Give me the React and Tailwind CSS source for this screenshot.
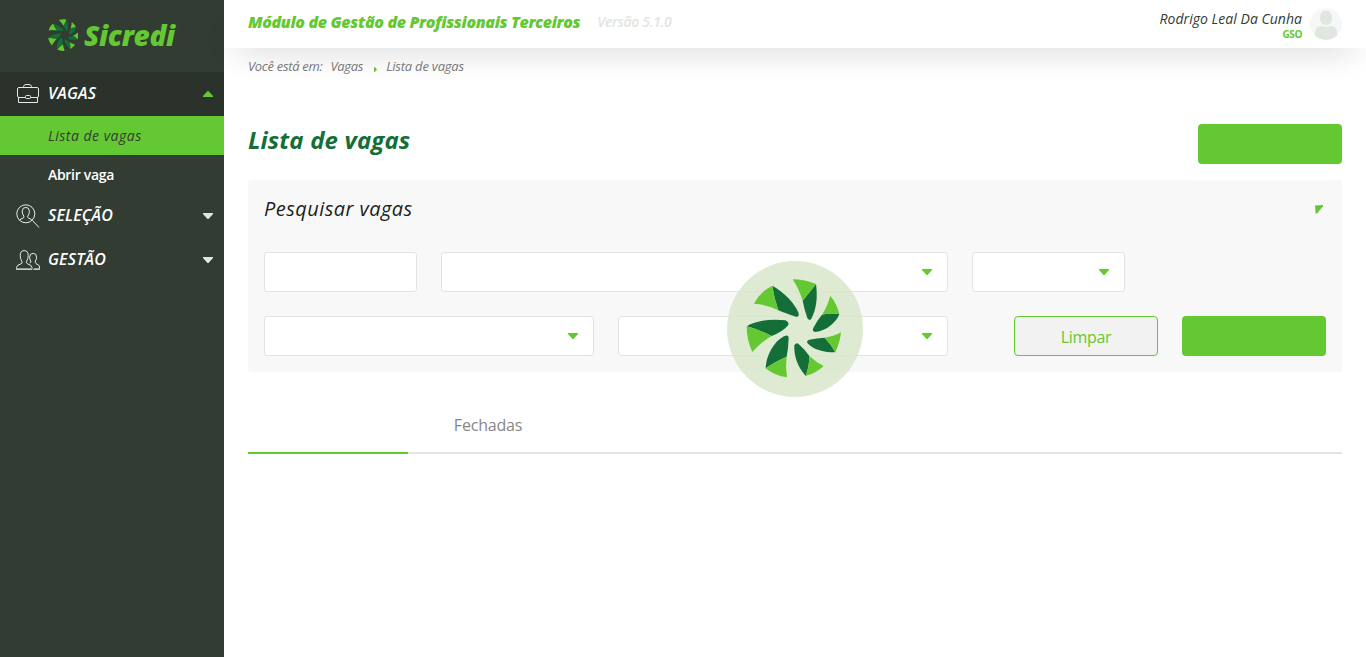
const petals = [
  ["M288,102 C293,140 290,175 274,206 Q268,214 262,204 Q252,175 248,152 Z", "M218,88 Q255,88 288,102 L248,152 Q236,115 218,88Z"],
  ["M358,192 C350,215 320,243 286,246 Q275,245 280,234 Q292,210 306,194 Q330,188 358,192Z", "M331,137 Q350,160 358,192 Q330,188 306,194 Q322,170 331,137Z"],
  ["M346,307 C310,308 282,298 264,281 Q257,272 268,269 Q290,264 314,263 Q334,284 346,307Z", "M363,247 Q360,278 346,307 Q334,284 314,263 Q340,260 363,247Z"],
  ["M257,378 C232,350 221,315 223,286 Q230,274 239,285 Q256,300 268,318 Q268,350 257,378Z", "M268,318 Q290,338 311,348 Q288,370 257,378 Q268,350 268,318Z"],
  ["M137,355 C138,320 160,275 192,259 Q206,252 206,265 Q205,295 200,320 Q160,338 137,355Z", "M137,355 Q160,338 200,320 Q196,350 201,382 Q165,378 137,355Z"],
  ["M80,229 C108,211 155,206 196,211 Q208,216 205,225 Q190,244 155,258 Q115,238 80,229Z", "M80,229 Q115,238 155,258 Q125,275 97,306 Q80,270 80,229Z"],
  ["M157,107 C190,125 225,160 236,190 Q238,202 228,200 Q195,190 175,181 Q162,145 157,107Z", "M157,107 Q162,145 175,181 Q140,163 102,161 Q120,125 157,107Z"],
];

function Pinwheel() {
  return petals.map(([dark, light]) => (
    <g key={dark}>
      <path d={dark} fill="#146e37" />
      <path d={light} fill="#64c832" />
    </g>
  ));
}

function Caret({ up = false, className }) {
  return (
    <svg width="10" height="6" viewBox="0 0 10 6" className={className} fill="currentColor">
      <path d={up ? "M0 6V5L4 .6Q5-.4 6 .6L10 5V6Z" : "M0 0V1L4 5.4Q5 6.4 6 5.4L10 1V0Z"} />
    </svg>
  );
}

function Briefcase() {
  return (
    <svg width="24" height="24" viewBox="0 0 24 24" fill="none" stroke="#e6e9e6" strokeWidth="1">
      <path d="M7.5 5.5V4.5Q8 2.5 10 2.5H13Q15 2.5 15.5 4.5V5.5" />
      <rect x="1.5" y="5.5" width="21" height="10" rx="1.5" />
      <path d="M2.5 15.5V20.5H21.5V15.5" />
      <rect x="9.5" y="13.5" width="5" height="3" rx="1" fill="#2b322b" />
    </svg>
  );
}

function SearchPerson() {
  return (
    <svg width="24" height="24" viewBox="0 0 24 24" fill="none" stroke="#fff" strokeWidth="0.9">
      <circle cx="9.8" cy="9.8" r="9" />
      <path d="M16.5 16.5L23 23.5" />
      <path d="M3.8 16.3Q4.2 14.8 7.2 14Q8.4 13.6 7.8 12.1Q6.2 10 6.2 7.2Q6.2 3.4 9.8 3.4Q13.4 3.4 13.4 7.2Q13.4 10 11.8 12.1Q11.2 13.6 12.4 14Q15.4 14.8 15.8 16.3" />
    </svg>
  );
}

function People() {
  return (
    <svg width="24" height="24" viewBox="0 0 24 24" fill="none" stroke="#fff" strokeWidth="0.9">
      <path d="M.5 21.5V19.5Q.5 17.2 5 15.8Q7 15.2 5.6 12.8Q4.2 11 4.2 7.4Q4.2 2.6 8.2 2.6Q12.2 2.6 12.2 7.4Q12.2 11 10.8 12.8Q9.6 15.2 11.4 15.8Q16 17.2 16 19.5V21.5Z" />
      <path d="M13.6 14.8Q15.4 14.6 14.8 13Q13.6 11.4 13.6 9.2Q13.6 5.4 17.1 5.4Q20.6 5.4 20.6 9.2Q20.6 11.4 19.4 13Q18.8 15 20 15.6Q23.5 16.8 23.5 19V21.5H17.5" />
      <path d="M.5 20.7H16M18 20.7H23.5" strokeWidth="1.4" stroke="#9ca19c" />
    </svg>
  );
}

function MenuItem({ icon, label, open = false }) {
  return (
    <div className={open ? "flex h-11 items-center bg-[#2b322b] pl-4 pr-[11px]" : "flex h-11 items-center pl-4 pr-[11px]"}>
      {icon}
      <span className="ml-2 flex-1 pb-0.5 text-base font-semibold italic tracking-[0.15px] text-white">{label}</span>
      <Caret up={open} className={open ? "text-[#64c832]" : "text-[#e1e6e1]"} />
    </div>
  );
}

function Field({ className, select = true }) {
  return (
    <div className={`flex h-10 items-center justify-end rounded-[3px] border border-[#e1e4e1] bg-white pr-[15px] ${className}`}>
      {select && <Caret className="text-[#64c832]" />}
    </div>
  );
}

export default function App() {
  return (
    <div className="flex h-[657px] w-full overflow-hidden bg-white font-['Open_Sans',sans-serif] text-[#323c32]">
      <aside className="w-56 shrink-0 bg-[#323c32]">
        <div className="flex h-[72px] items-center pb-0.5 pl-[47px]">
          <svg width="32" height="32" viewBox="72 85 300 300">
            <g transform="rotate(-14 222 235)"><Pinwheel /></g>
          </svg>
          <span className="ml-[5px] text-[28px] font-extrabold italic leading-8 tracking-[-0.3px] text-[#64c832]">Sicredi</span>
        </div>
        <MenuItem icon={<Briefcase />} label="VAGAS" open />
        <div className="flex h-[39px] items-center bg-[#64c832] pl-12 text-sm italic">
          <span className="tracking-[0.5px]">Lista de vagas</span>
        </div>
        <div className="flex h-[39px] items-center pl-12 text-sm font-semibold text-white">
          <span className="tracking-[-0.3px]">Abrir vaga</span>
        </div>
        <MenuItem icon={<SearchPerson />} label="SELEÇÃO" />
        <MenuItem icon={<People />} label="GESTÃO" />
      </aside>

      <div className="flex min-w-0 flex-1 flex-col">
        <header className="flex h-12 shrink-0 items-center justify-between px-6 shadow-[0_16px_32px_-12px_rgba(0,0,0,0.16)]">
          <div className="flex items-center pb-1">
            <h1 className="text-base font-extrabold italic tracking-[-0.35px] text-[#64c832]">Módulo de Gestão de Profissionais Terceiros</h1>
            <span className="ml-[17px] text-sm font-semibold italic tracking-[-0.3px] text-[#e1e6e1]">Versão 5.1.0</span>
          </div>
          <div className="flex items-center gap-2">
            <div className="pt-px text-right">
              <div className="text-sm italic leading-[18px] tracking-[0.03px]">Rodrigo Leal Da Cunha</div>
              <div className="text-[10px] font-bold leading-3 tracking-[-0.4px] text-[#64c832]">GSO</div>
            </div>
            <svg width="32" height="32" viewBox="0 0 32 32">
              <circle cx="16" cy="16" r="16" fill="#f7f7f7" />
              <rect x="10" y="2.5" width="12" height="14.5" rx="6" fill="#e1e6e1" />
              <path d="M5 25Q5 18 11 18Q16 19.5 21 18Q27 18 27 25V27.6A16 16 0 0 1 5 27.6Z" fill="#e1e6e1" />
            </svg>
          </div>
        </header>

        <main className="px-6">
          <nav className="flex h-[38px] items-center text-[13px] italic text-[#787878]">
            <span className="tracking-[-0.3px]">Você está em:</span>
            <span className="ml-2 tracking-[-0.3px]">Vagas</span>
            <svg width="3" height="5" viewBox="0 0 3 5" className="ml-[11px] mr-[9px] mt-1 fill-[#64c832]"><path d="M0 0H.8L3 2.5L.8 5H0Z" /></svg>
            <span className="tracking-[-0.2px]">Lista de vagas</span>
          </nav>

          <div className="mt-[38px] flex h-10 justify-between">
            <h2 className="text-2xl font-bold italic leading-8 tracking-[0.15px] text-[#146e37]">Lista de vagas</h2>
            <button aria-label="Abrir vaga" className="h-10 w-36 rounded bg-[#64c832]" />
          </div>

          <section className="mt-4 h-48 rounded bg-[#f8f8f8] px-4">
            <div className="flex h-[72px] items-start justify-between pr-[3px] pt-[15px]">
              <h3 className="text-xl italic tracking-[0.45px] text-[#1e1e1e]">Pesquisar vagas</h3>
              <svg width="8" height="9" viewBox="0 0 8 9" className="mt-[10px] fill-[#64c832]"><path d="M0 .6L8 0V1.3L2 8.5H.6Z" /></svg>
            </div>
            <div className="flex gap-6">
              <Field className="w-[153px]" select={false} />
              <Field className="w-[507px]" />
              <Field className="w-[153px]" />
            </div>
            <div className="mt-6 flex gap-6">
              <Field className="w-[330px]" />
              <Field className="w-[330px]" />
              <button className="ml-auto h-10 w-36 rounded border border-[#64c832] bg-[#f2f2f2] pt-0.5 text-base font-medium text-[#64c832]"><span className="tracking-[-0.3px]">Limpar</span></button>
              <button aria-label="Pesquisar" className="h-10 w-36 rounded bg-[#64c832]" />
            </div>
          </section>

          <div className="mt-6 flex h-[58px] border-b-2 border-[#e1e6e1] text-base text-[#878787]">
            <div className="-mb-0.5 w-40 border-b-2 border-[#64c832]" />
            <div className="w-40 pt-[17px] text-center font-medium"><span className="tracking-[-0.2px]">Fechadas</span></div>
          </div>
        </main>
      </div>

      <svg className="absolute left-[720px] top-[250px]" width="150" height="150" viewBox="0 0 450 450">
        <circle cx="225" cy="237" r="204" fill="#d7e6c8" fillOpacity="0.82" />
        <Pinwheel />
      </svg>
    </div>
  );
}
